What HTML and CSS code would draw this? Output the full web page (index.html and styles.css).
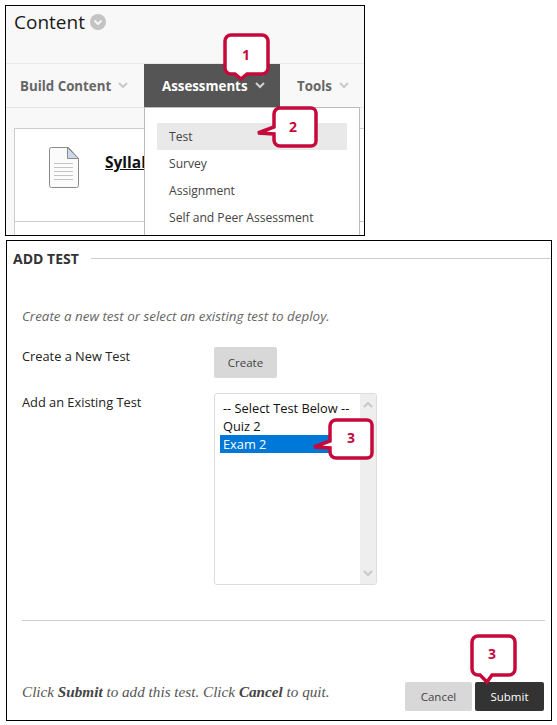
FILE: index.html
```html
<!DOCTYPE html>
<html lang="en">
<head>
<meta charset="utf-8">
<title>Add Test</title>
<link rel="stylesheet" href="styles.css">
</head>
<body>
<section class="panel-top">
  <header class="title-bar">
    <h1 class="page-title">Content</h1>
    <svg class="title-icon" width="16" height="16" viewBox="0 0 16 16"><circle cx="8" cy="8" r="8" fill="#c4c4c4"/><path d="M4.500 6.500 8 10l3.500-3.500" fill="none" stroke="#f4f4f4" stroke-width="2"/></svg>
  </header>
  <nav class="nav-bar">
    <div class="nav-item nav-build">Build Content<svg class="chev" width="10" height="7" viewBox="0 0 10 7"><path d="M1 1l4 4 4-4" fill="none" stroke="#c8c8c8" stroke-width="2"/></svg></div>
    <div class="nav-item nav-active">Assessments<svg class="chev" width="10" height="7" viewBox="0 0 10 7"><path d="M1 1l4 4 4-4" fill="none" stroke="#d0d0d0" stroke-width="2"/></svg></div>
    <div class="nav-item nav-tools">Tools<svg class="chev" width="10" height="7" viewBox="0 0 10 7"><path d="M1 1l4 4 4-4" fill="none" stroke="#c8c8c8" stroke-width="2"/></svg></div>
  </nav>
  <div class="content-area">
    <div class="card">
      <div class="card-row">
        <svg class="doc-icon" width="30" height="41" viewBox="0 0 30 41">
          <path d="M.5 2.500a2 2 0 0 1 2-2h17l10 11v27a2 2 0 0 1-2 2h-25a2 2 0 0 1-2-2z" fill="#fbfbfb" stroke="#8a8a8a"/>
          <path d="M18.500.5v11h11z" fill="#c9d9ea" stroke="#8a8a8a"/>
          <path d="M5 16.500h19M5 20.500h19M5 24.500h19M5 28.500h19M5 32.500h19" stroke="#c4c4c4"/>
        </svg>
        <a class="card-link">Syllabus</a>
      </div>
    </div>
  </div>
  <ul class="menu">
    <li class="menu-item menu-hover">Test</li>
    <li class="menu-item">Survey</li>
    <li class="menu-item">Assignment</li>
    <li class="menu-item">Self and Peer Assessment</li>
  </ul>
  <svg class="callout callout-1" width="47" height="50" viewBox="0 0 47 50"><path d="M8 2h31a6 6 0 0 1 6 6v27a6 6 0 0 1-6 6H24l-6 5-6-5H8a6 6 0 0 1-6-6V8a6 6 0 0 1 6-6z" fill="#fff" stroke="#c5093b" stroke-width="3.500"/><text x="23" y="27" class="callout-num">1</text></svg>
  <svg class="callout callout-2" width="60" height="42" viewBox="0 0 60 42"><path d="M23 2h31a5 5 0 0 1 5 5v28a5 5 0 0 1-5 5H23a6 6 0 0 1-6-6v-6L1 27l16-6V8a6 6 0 0 1 6-6z" fill="#fff" stroke="#c5093b" stroke-width="3.500"/><text x="36" y="26" class="callout-num">2</text></svg>
</section>

<section class="panel-form">
  <h2 class="section-title"><span>ADD TEST</span></h2>
  <p class="intro">Create a new test or select an existing test to deploy.</p>
  <div class="form-row row-create">
    <div class="form-label">Create a New Test</div>
    <button class="btn btn-create">Create</button>
  </div>
  <div class="form-row row-list">
    <div class="form-label">Add an Existing Test</div>
    <div class="listbox">
      <div class="options">
        <div class="option">-- Select Test Below --</div>
        <div class="option">Quiz 2</div>
        <div class="option option-selected">Exam 2</div>
      </div>
      <div class="scrollbar">
        <svg width="10" height="7" viewBox="0 0 10 7"><path d="M1 6l4-4 4 4" fill="none" stroke="#c8c8c8" stroke-width="2"/></svg>
        <svg width="10" height="7" viewBox="0 0 10 7"><path d="M1 1l4 4 4-4" fill="none" stroke="#c8c8c8" stroke-width="2"/></svg>
      </div>
    </div>
  </div>
  <hr class="divider">
  <footer class="form-footer">
    <p class="hint">Click <b>Submit</b> to add this test. Click <b>Cancel</b> to quit.</p>
    <div class="actions">
      <button class="btn btn-cancel">Cancel</button>
      <button class="btn btn-submit">Submit</button>
    </div>
  </footer>
  <svg class="callout callout-3a" width="60" height="42" viewBox="0 0 60 42"><path d="M23 2h31a5 5 0 0 1 5 5v28a5 5 0 0 1-5 5H23a6 6 0 0 1-6-6v-4L1 29l16-6V8a6 6 0 0 1 6-6z" fill="#fff" stroke="#c5093b" stroke-width="3.500"/><text x="38" y="25" class="callout-num">3</text></svg>
  <svg class="callout callout-3b" width="47" height="50" viewBox="0 0 47 50"><path d="M8 2h31a6 6 0 0 1 6 6v27a6 6 0 0 1-6 6H22l-5 7-7-7H8a6 6 0 0 1-6-6V8a6 6 0 0 1 6-6z" fill="#fff" stroke="#c5093b" stroke-width="3.500"/><text x="22" y="25" class="callout-num">3</text></svg>
</section>
</body>
</html>
```
FILE: styles.css
```css
* { box-sizing: border-box; }
html, body { margin: 0; padding: 0; background: #fff; }
body { padding-top: 5px; font-family: "Open Sans", sans-serif; color: #222; width: 557px; height: 725px; overflow: hidden; }

.panel-top {
  position: relative; width: 360px; height: 231px; margin-left: 5px;
  border: 1px solid #000; background: #f8f8f8; overflow: hidden;
}
.title-bar { display: flex; align-items: center; gap: 5px; height: 58px; padding: 0 0 25px 8px; border-bottom: 1px solid #e8e8e8; }
.page-title { margin: 0; font-size: 19px; font-weight: 400; color: #1a1a1a; line-height: 26px; }

.nav-bar { display: flex; height: 44px; border-bottom: 1px solid #e4e4e4; }
.nav-item { display: flex; align-items: center; gap: 7px; height: 43px; font-size: 13.300px; font-weight: 700; color: #666; }
.nav-build { width: 138px; padding-left: 14px; }
.nav-active { width: 136px; padding-left: 18px; background: #555; color: #fff; }
.nav-tools { padding-left: 17px; }

.content-area { padding: 20px 0 0 8px; }
.card { height: 110px; background: #fff; border: 1px solid #ccc; border-width: 1px 0 0 1px; }
.card-row { display: flex; align-items: flex-start; height: 93px; border-bottom: 1px solid #ccc; padding: 18px 0 0 34px; }
.doc-icon { flex: none; }
.card-link { margin-left: 26px; margin-top: 4px; font-size: 15.500px; font-weight: 700; color: #111; text-decoration: underline; }

.menu {
  position: absolute; left: 138px; top: 101px; width: 216px; height: 135px;
  margin: 0; padding: 15px 12px 0; list-style: none; background: #fff; border: 1px solid #bbb;
}
.menu-item { height: 27px; padding-left: 12px; font-size: 12.100px; line-height: 27px; color: #444; }
.menu-hover { background: #e9e9e9; }

.callout { position: absolute; overflow: visible; }
.callout-num { font-family: "Open Sans", sans-serif; font-size: 14px; font-weight: 700; fill: #c5093b; text-anchor: middle; }
.callout-1 { left: 217px; top: 27px; }
.callout-2 { left: 251px; top: 100px; }
.callout-3a { left: 306px; top: 177px; }
.callout-3b { left: 463px; top: 393px; }

.panel-form { position: relative; width: 546px; height: 481px; margin: 4px 0 0 6px; border: 1px solid #000; background: #fff; }
.section-title {
  display: flex; align-items: center; gap: 12px; margin: 0; padding: 8px 0 0 6px;
  font-size: 14px; font-weight: 700; color: #333; line-height: 19px;
}
.section-title::after { content: ""; flex: 1; height: 1px; background: #ccc; }
.intro { margin: 39px 0 0 15px; font-size: 13.400px; font-style: italic; color: #666; line-height: 18px; }
.form-row { display: flex; margin-left: 15px; }
.form-label { width: 192px; font-size: 12.800px; color: #222; line-height: 18px; }
.row-create { margin-top: 22px; }
.row-list { margin-top: 15px; }
.btn { border: 0; border-radius: 2px; font-family: "Open Sans", sans-serif; font-size: 11.500px; color: #444; background: #d8d8d8; padding: 0; }
.btn-create { width: 63px; height: 31px; }
.listbox { display: flex; width: 163px; height: 192px; padding: 5px 0 0 5px; border: 1px solid #ddd; border-radius: 3px; }
.options { flex: 1; }
.option { height: 18px; padding-left: 3px; font-size: 12.800px; line-height: 18px; color: #111; }
.option-selected { background: #0078d7; color: #fff; }
.scrollbar { display: flex; flex-direction: column; justify-content: space-between; align-items: center; width: 16px; height: 190px; margin-top: -5px; padding: 7px 0; background: #eee; }
.divider { height: 1px; margin: 35px 0 0 15px; width: 523px; border: 0; background: #ccc; }
.form-footer { display: flex; justify-content: space-between; align-items: flex-end; margin: 61px 7px 0 15px; }
.hint { margin: 0 0 10px; font-family: "Liberation Serif", serif; font-style: italic; font-size: 15.200px; color: #555; line-height: 18px; }
.hint b { color: #444; }
.actions { display: flex; gap: 3px; }
.btn-cancel { width: 67px; height: 29px; }
.btn-submit { width: 69px; height: 29px; background: #333; color: #fff; }
```
